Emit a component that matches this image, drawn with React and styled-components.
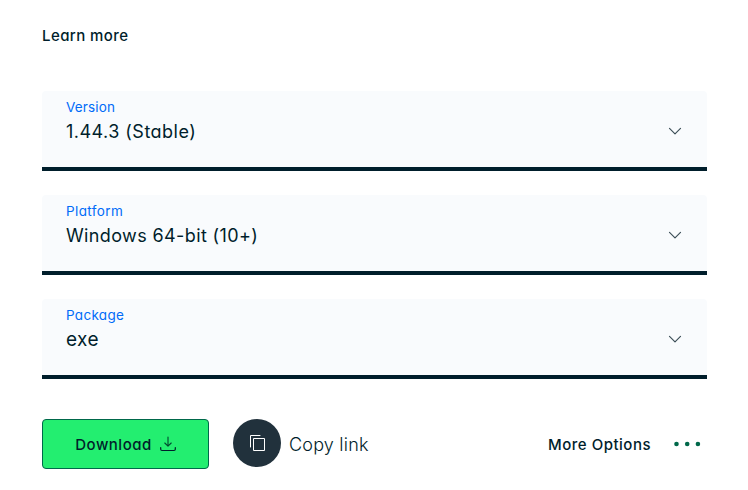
import React from "react";
import styled, { createGlobalStyle } from "styled-components";

const GlobalStyle = createGlobalStyle`
  *, *::before, *::after { box-sizing: border-box; }
  body {
    margin: 0;
    background: #ffffff;
    color: #001e2b;
    font-family: Inter, "Liberation Sans", sans-serif;
    font-feature-settings: "cv11" 1;
  }
`;

const Page = styled.main`
  width: 748px;
  height: 490px;
  padding: 24px 41px 0 42px;
  display: flex;
  flex-direction: column;
  overflow: hidden;
`;

const LearnMore = styled.a`
  align-self: flex-start;
  font-size: 15px;
  font-weight: 500;
  line-height: 24px;
  letter-spacing: 0.42px;
  white-space: nowrap;
`;

const Fields = styled.section`
  margin-top: 43px;
  display: flex;
  flex-direction: column;
  gap: 24px;
`;

const Field = styled.div`
  height: 80px;
  padding: 6px 24px 0;
  display: flex;
  justify-content: space-between;
  background: #f9fbfd;
  border-bottom: 4px solid #001e2b;
  border-radius: 4px 4px 0 0;
`;

const FieldText = styled.div`
  display: flex;
  flex-direction: column;
`;

const Label = styled.span`
  color: #016bf8;
  font-size: 13.5px;
  line-height: 20px;
  letter-spacing: ${(p) => p.$tracking}px;
`;

const Value = styled.span`
  font-size: ${(p) => p.$size}px;
  line-height: 30px;
  white-space: nowrap;
  letter-spacing: ${(p) => p.$tracking}px;
`;

const Chevron = styled.svg`
  width: 16px;
  height: 16px;
  margin-top: 26px;
`;

const Actions = styled.div`
  margin-top: 40px;
  display: flex;
  align-items: flex-start;
`;

const DownloadButton = styled.button`
  width: 167px;
  height: 50px;
  padding: 0;
  display: flex;
  align-items: center;
  justify-content: center;
  gap: 8px;
  background: #23ee70;
  border: 1px solid #00684a;
  border-radius: 4px;
  color: #001e2b;
  font: inherit;
  font-feature-settings: inherit;
  font-size: 15px;
  font-weight: 500;
  letter-spacing: 0.5px;
`;

const CopyButton = styled.button`
  height: 48px;
  margin-left: 24px;
  padding: 0;
  display: flex;
  align-items: center;
  gap: 8px;
  border: 0;
  background: none;
  color: #001e2b;
  font: inherit;
  font-feature-settings: inherit;
  font-size: 18px;
  font-weight: 300;
  letter-spacing: 0.2px;
`;

const CopyCircle = styled.span`
  width: 48px;
  height: 48px;
  display: grid;
  place-items: center;
  background: #21313c;
  border-radius: 50%;
`;

const CopyText = styled.span`
  padding-top: 3px;
`;

const MoreButton = styled.button`
  height: 50px;
  margin-left: auto;
  padding: 0 6px 0 0;
  display: flex;
  align-items: center;
  gap: 22px;
  border: 0;
  background: none;
  color: #001e2b;
  font: inherit;
  font-feature-settings: inherit;
  font-size: 15px;
  font-weight: 500;
  letter-spacing: 0.5px;
`;

const fields = [
  { label: "Version", value: "1.44.3 (Stable)", labelTracking: 0.15, tracking: 0.47, size: 18 },
  { label: "Platform", value: "Windows 64-bit (10+)", labelTracking: 0.38, tracking: 0.38, size: 18 },
  { label: "Package", value: "exe", labelTracking: 0.3, tracking: 0.4, size: 19 },
];

export default function App() {
  return (
    <>
      <GlobalStyle />
      <Page>
        <LearnMore>Learn more</LearnMore>
        <Fields>
          {fields.map((f) => (
            <Field key={f.label}>
              <FieldText>
                <Label $tracking={f.labelTracking}>{f.label}</Label>
                <Value $tracking={f.tracking} $size={f.size}>{f.value}</Value>
              </FieldText>
              <Chevron viewBox="0 0 16 16" fill="none" stroke="#3d4f58" strokeWidth="1.2" strokeLinecap="round" strokeLinejoin="round">
                <path d="M2.5 5.3 8 10.8l5.5-5.5" />
              </Chevron>
            </Field>
          ))}
        </Fields>
        <Actions>
          <DownloadButton>
            Download
            <svg width="16" height="18" viewBox="0 0 16 18" fill="none" stroke="#001e2b" strokeLinecap="round" strokeLinejoin="round">
              <path d="M8 2v9M4.8 8 8 11.2 11.2 8" stroke="#00492f" strokeWidth="1.1" />
              <path d="M.7 12.5v1.8c0 .8.5 1.2 1.3 1.2h12c.8 0 1.3-.4 1.3-1.2v-1.8" strokeWidth="1.2" />
            </svg>
          </DownloadButton>
          <CopyButton>
            <CopyCircle>
              <svg width="16" height="18" viewBox="0 0 16 18" fill="none" stroke="#ffffff" strokeLinejoin="round">
                <path d="M4.5 4.5h11v12h-11z" />
                <path d="M1.5 13V1.5H11" strokeLinecap="round" />
              </svg>
            </CopyCircle>
            <CopyText>Copy link</CopyText>
          </CopyButton>
          <MoreButton>
            More Options
            <svg width="28" height="6" viewBox="0 0 28 6" fill="#00684a">
              <circle cx="3.5" cy="3" r="2.3" />
              <circle cx="14.2" cy="3" r="2.3" />
              <circle cx="24.9" cy="3" r="2.3" />
            </svg>
          </MoreButton>
        </Actions>
      </Page>
    </>
  );
}
